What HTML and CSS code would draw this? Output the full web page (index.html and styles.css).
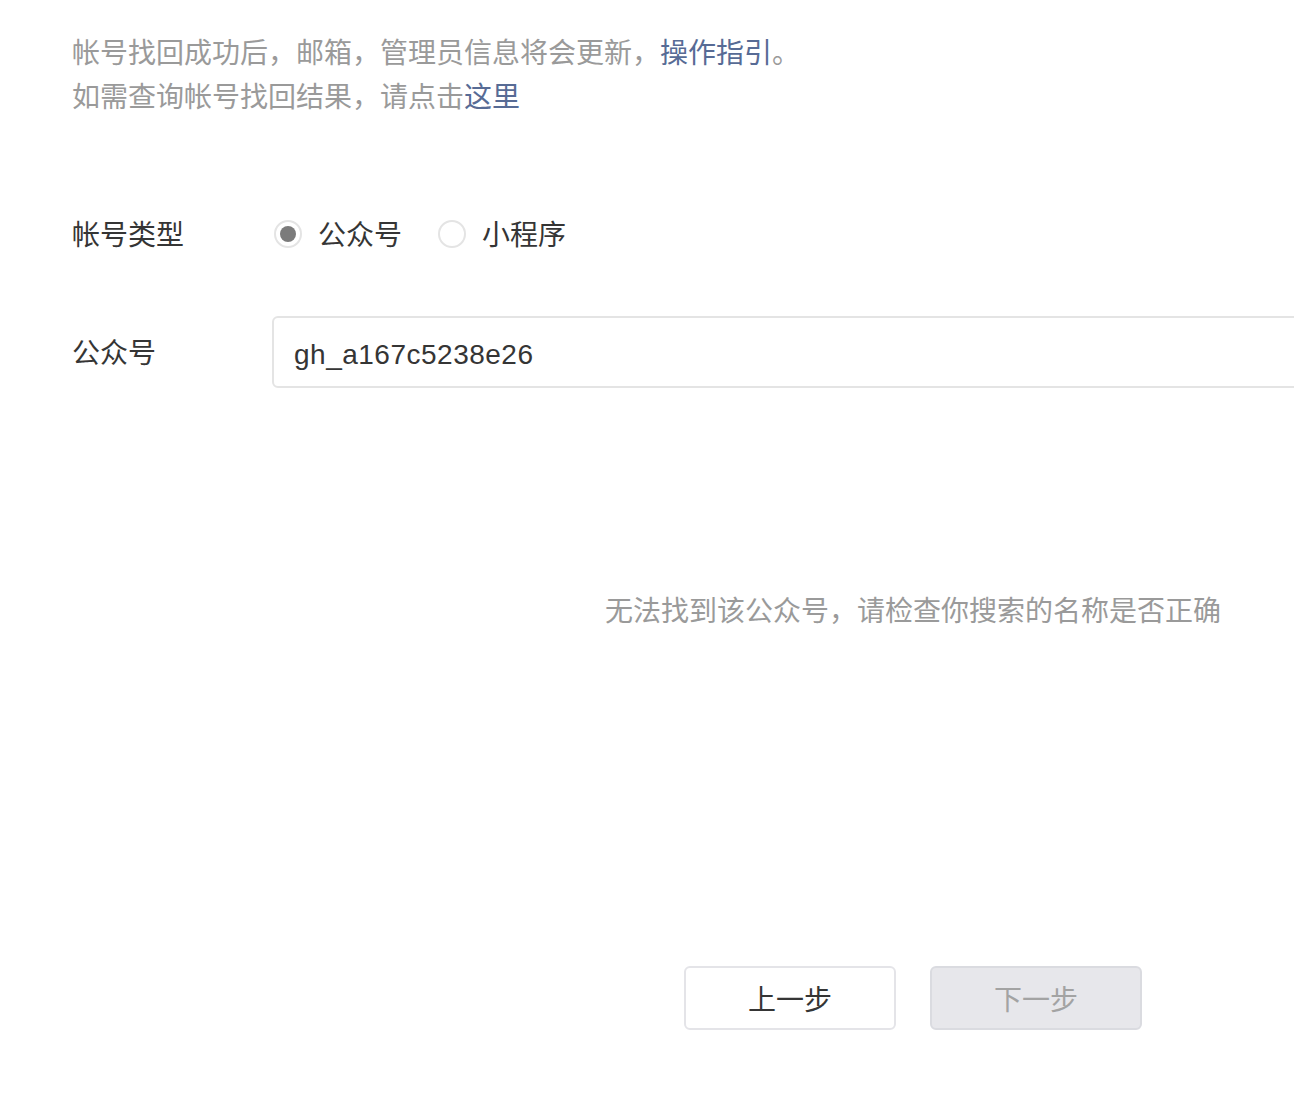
FILE: index.html
```html
<!DOCTYPE html>
<html lang="zh-CN">
<head>
<meta charset="utf-8">
<title>帐号找回</title>
<link rel="stylesheet" href="styles.css">
</head>
<body>
<div class="page">
  <div class="tips">
    <p>帐号找回成功后，邮箱，管理员信息将会更新，<a class="link" href="#">操作指引</a>。</p>
    <p>如需查询帐号找回结果，请点击<a class="link" href="#">这里</a></p>
  </div>

  <div class="form">
    <div class="row row-radio">
      <div class="label">帐号类型</div>
      <div class="field radios">
        <label class="radio checked"><span class="dot"></span><span class="radio-text">公众号</span></label>
        <label class="radio"><span class="dot"></span><span class="radio-text">小程序</span></label>
      </div>
    </div>
    <div class="row row-input">
      <div class="label">公众号</div>
      <div class="field">
        <div class="input">gh_a167c5238e26</div>
      </div>
    </div>
  </div>

  <div class="result">
    <p class="empty">无法找到该公众号，请检查你搜索的名称是否正确</p>
    <div class="actions">
      <button class="btn btn-default" type="button">上一步</button>
      <button class="btn btn-disabled" type="button" disabled>下一步</button>
    </div>
  </div>
</div>
</body>
</html>
```

FILE: styles.css
```css
html, body {
  margin: 0;
  padding: 0;
  overflow: hidden;
  background: #fff;
}

body {
  font-family: "Liberation Sans", "Noto Sans CJK SC", sans-serif;
  color: #353535;
  font-size: 28px;
}

.page {
  padding: 32px 0 0 72px;
  width: 1554px;
  box-sizing: border-box;
}

.tips p {
  margin: 0;
  line-height: 44px;
  color: #9a9a9a;
}

.link {
  color: #576b95;
  text-decoration: none;
}

.form {
  margin-top: 92px;
}

.row {
  display: flex;
  align-items: center;
}

.label {
  width: 200px;
  flex: none;
  line-height: 40px;
  padding-top: 4px;
  color: #353535;
}

.field {
  flex: 1;
}

.row-input {
  margin-top: 60px;
}

.radios {
  display: flex;
  align-items: center;
  gap: 36px;
  padding-left: 2px;
}

.radio {
  display: flex;
  align-items: center;
  gap: 16px;
}

.radio-text {
  line-height: 40px;
  padding-top: 4px;
}

.dot {
  width: 28px;
  height: 28px;
  box-sizing: border-box;
  border: 2px solid #e4e4e4;
  border-radius: 50%;
  display: flex;
  align-items: center;
  justify-content: center;
}

.radio.checked .dot::after {
  content: "";
  width: 16px;
  height: 16px;
  border-radius: 50%;
  background: #7b7b7b;
}

.input {
  height: 72px;
  box-sizing: border-box;
  border: 2px solid #e4e4e4;
  border-radius: 6px;
  padding: 5px 20px 0;
  display: flex;
  align-items: center;
  color: #353535;
  letter-spacing: 0.5px;
}

.result {
  margin-left: 200px;
  width: 1282px;
}

.empty {
  margin: 200px 0 0;
  padding-top: 4px;
  text-align: center;
  line-height: 40px;
  color: #9a9a9a;
}

.actions {
  margin-top: 334px;
  display: flex;
  justify-content: center;
  gap: 34px;
}

.btn {
  width: 212px;
  height: 64px;
  box-sizing: border-box;
  border-radius: 6px;
  font-family: "Liberation Sans", "Noto Sans CJK SC", sans-serif;
  font-size: 28px;
  padding: 0;
}

.btn-default {
  background: #fff;
  border: 2px solid #e4e4e8;
  color: #353535;
}

.btn-disabled {
  background: #e7e7eb;
  border: 2px solid #dadbe0;
  color: #a3a3a3;
}
```
